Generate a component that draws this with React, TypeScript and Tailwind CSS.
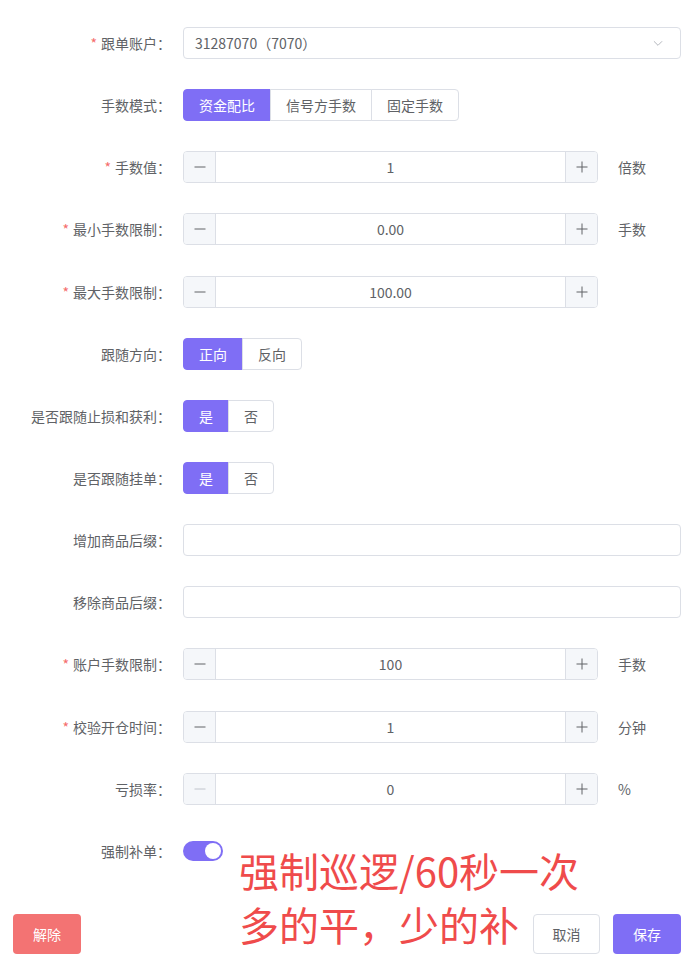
import { ReactNode } from 'react';

const font = { fontFamily: '"Noto Sans CJK SC", "Noto Sans", sans-serif' };

function Row({ label, required = false, children }: { label: string; required?: boolean; children?: ReactNode }) {
  return (
    <div className="flex items-center h-8">
      <label className="w-[183px] shrink-0 pr-3 text-right text-sm text-[#606266] whitespace-nowrap">
        {required && <span className="text-[#f56c6c] mr-1">*</span>}
        {label}：
      </label>
      <div className="flex-1 flex items-center">{children}</div>
    </div>
  );
}

function Minus({ disabled = false }: { disabled?: boolean }) {
  return (
    <svg width="12" height="12" viewBox="0 0 12 12">
      <path d="M0.5 6h11" stroke={disabled ? '#c0c4cc' : '#606266'} strokeWidth="1" />
    </svg>
  );
}

function Plus() {
  return (
    <svg width="12" height="12" viewBox="0 0 12 12">
      <path d="M0.5 6h11M6 0.5v11" stroke="#606266" strokeWidth="1" />
    </svg>
  );
}

function NumberInput({ value, suffix, minDisabled = false }: { value: string; suffix?: string; minDisabled?: boolean }) {
  return (
    <>
      <div className="flex w-[415px] h-8 border border-[#dcdfe6] rounded-[4px] overflow-hidden">
        <div className="w-8 shrink-0 bg-[#f5f7fa] border-r border-[#dcdfe6] flex items-center justify-center">
          <Minus disabled={minDisabled} />
        </div>
        <div className="flex-1 flex items-center justify-center text-sm text-[#606266]">{value}</div>
        <div className="w-8 shrink-0 bg-[#f5f7fa] border-l border-[#dcdfe6] flex items-center justify-center">
          <Plus />
        </div>
      </div>
      {suffix && <span className="ml-5 text-sm text-[#606266]">{suffix}</span>}
    </>
  );
}

function RadioGroup({ options, active = 0 }: { options: string[]; active?: number }) {
  return (
    <div className="flex h-8">
      {options.map((o, i) => (
        <div
          key={o}
          className={`px-[15px] flex items-center text-sm border ${
            i === active ? 'bg-[#7f6ef5] border-[#7f6ef5] text-white' : 'bg-white border-[#dcdfe6] text-[#606266]'
          } ${i > 0 ? '-ml-px' : ''} ${i === 0 ? 'rounded-l-[4px]' : ''} ${i === options.length - 1 ? 'rounded-r-[4px]' : ''}`}
        >
          {o}
        </div>
      ))}
    </div>
  );
}

function TextInput({ children }: { children?: ReactNode }) {
  return (
    <div className="flex-1 h-8 border border-[#dcdfe6] rounded-[4px] flex items-center px-[11px] text-sm text-[#606266]">
      {children}
    </div>
  );
}

export default function App() {
  return (
    <div className="relative w-[693px] h-[970px] bg-white" style={font}>
      <div className="flex flex-col gap-[30.15px] pt-[27px] pr-3">
        <Row label="跟单账户" required>
          <TextInput>
            <span className="flex-1">31287070（7070）</span>
            <svg width="14" height="14" viewBox="0 0 24 24" fill="none" stroke="#a8abb2" strokeWidth="1.5" className="mr-1">
              <path d="M5 9l7 7 7-7" />
            </svg>
          </TextInput>
        </Row>
        <Row label="手数模式">
          <RadioGroup options={['资金配比', '信号方手数', '固定手数']} />
        </Row>
        <Row label="手数值" required>
          <NumberInput value="1" suffix="倍数" />
        </Row>
        <Row label="最小手数限制" required>
          <NumberInput value="0.00" suffix="手数" />
        </Row>
        <Row label="最大手数限制" required>
          <NumberInput value="100.00" />
        </Row>
        <Row label="跟随方向">
          <RadioGroup options={['正向', '反向']} />
        </Row>
        <Row label="是否跟随止损和获利">
          <RadioGroup options={['是', '否']} />
        </Row>
        <Row label="是否跟随挂单">
          <RadioGroup options={['是', '否']} />
        </Row>
        <Row label="增加商品后缀">
          <TextInput />
        </Row>
        <Row label="移除商品后缀">
          <TextInput />
        </Row>
        <Row label="账户手数限制" required>
          <NumberInput value="100" suffix="手数" />
        </Row>
        <Row label="校验开仓时间" required>
          <NumberInput value="1" suffix="分钟" />
        </Row>
        <Row label="亏损率">
          <NumberInput value="0" suffix="%" minDisabled />
        </Row>
        <Row label="强制补单">
          <div className="w-10 h-5 rounded-full bg-[#7f6ef5] flex items-center justify-end px-[2px]">
            <div className="w-4 h-4 rounded-full bg-white" />
          </div>
        </Row>
      </div>

      <div className="flex items-center justify-between pl-[13px] pr-3 mt-[47px]">
        <button className="w-[68px] h-10 rounded-[4px] bg-[#f37373] text-white text-sm">解除</button>
        <div className="flex gap-[13px]">
          <button className="w-[67px] h-10 rounded-[4px] bg-white border border-[#dcdfe6] text-[#606266] text-sm">取消</button>
          <button className="w-[68px] h-10 rounded-[4px] bg-[#7f6ef5] text-white text-sm">保存</button>
        </div>
      </div>

      <div className="absolute left-[239px] top-[843px] text-[40px] leading-[54px] text-[#ef4b4b] pointer-events-none">
        <div>强制巡逻/60秒一次</div>
        <div>多的平，少的补</div>
      </div>
    </div>
  );
}
